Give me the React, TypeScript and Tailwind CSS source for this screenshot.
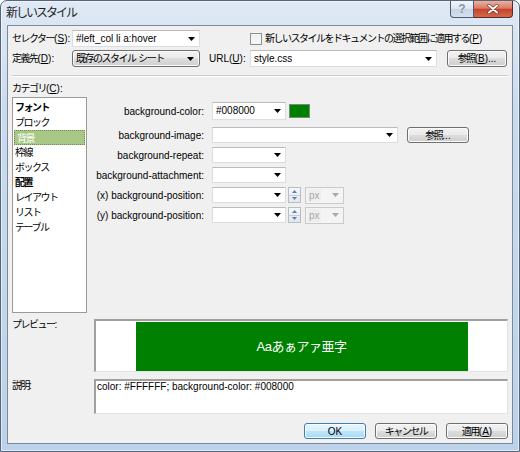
import React from 'react';

// Japanese runs get tighter tracking to match the narrow system UI font
const J = ({ children }: { children: React.ReactNode }) => <span className="tracking-[-1.5px]">{children}</span>;

const Arrow = ({ color = '#000' }: { color?: string }) => (
  <svg width="7" height="4" viewBox="0 0 7 4" className="shrink-0">
    <path d="M0 0h7L3.5 4z" fill={color} />
  </svg>
);

const Combo = ({ width, height = 'h-[16px]', text }: { width: string; height?: string; text?: string }) => (
  <div
    className={`flex items-center justify-between bg-white border border-[#dcdde2] border-t-[#b9bbc1] pl-[3px] pr-[4px] ${width} ${height}`}
  >
    <span className="truncate leading-none">{text}</span>
    <Arrow />
  </div>
);

const Btn = ({ children, width, height = 'h-[16px]', primary }: { children: React.ReactNode; width: string; height?: string; primary?: boolean }) => (
  <div
    className={`flex items-center justify-center rounded-[3px] border shadow-[inset_0_0_0_1px_#fbfbfb] ${
      primary
        ? 'border-[#3c7fb1] bg-[linear-gradient(#eaf6fd_0%,#d9f0fc_50%,#bee6fd_50%,#a7d9f5_100%)]'
        : 'border-[#707070] bg-[linear-gradient(#f2f2f2_0%,#ebebeb_50%,#dddddd_50%,#cfcfcf_100%)]'
    } ${width} ${height}`}
  >
    {children}
  </div>
);

const Spinner = () => (
  <div className="ml-[2px] flex h-[16px] w-[13px] flex-col border border-[#b8bcc4] bg-[linear-gradient(#f6f7f9,#e3e6ea)]">
    <div className="flex flex-1 items-center justify-center border-b border-[#c9ccd2]">
      <svg width="5" height="3" viewBox="0 0 5 3"><path d="M0 3h5L2.5 0z" fill="#5b7fbd" /></svg>
    </div>
    <div className="flex flex-1 items-center justify-center">
      <svg width="5" height="3" viewBox="0 0 5 3"><path d="M0 0h5L2.5 3z" fill="#5b7fbd" /></svg>
    </div>
  </div>
);

const PxBox = () => (
  <div className="ml-[4px] flex h-[17px] w-[39px] items-center justify-between border border-[#cacaca] bg-[#f4f4f4] pr-[4px]">
    <span className="ml-[2px] bg-[#eeeeee] px-[1px] leading-[13px] text-[#a8a8a8]">px</span>
    <Arrow color="#a8a8a8" />
  </div>
);

const categories = [
  { name: 'フォント', bold: true },
  { name: 'ブロック' },
  { name: '背景', selected: true },
  { name: '枠線' },
  { name: 'ボックス' },
  { name: '配置', bold: true },
  { name: 'レイアウト' },
  { name: 'リスト' },
  { name: 'テーブル' },
];

const FormRow = ({ label, children, className = '' }: { label: string; children: React.ReactNode; className?: string }) => (
  <div className={`flex items-center ${className}`}>
    <div className="w-[117px] text-right">{label}</div>
    <div className="ml-[8px] flex items-center">{children}</div>
  </div>
);

export default function App() {
  return (
    <div className="flex h-[452px] w-[520px] flex-col rounded-t-[7px] border border-[#55657a] bg-[linear-gradient(#dfe9f5,#cadbee_25%,#bcd2ea)] px-[6px] pb-[7px] font-[family-name:'Liberation_Sans','Noto_Sans_CJK_JP',sans-serif] text-[10px] text-black shadow-[inset_0_0_0_1px_rgba(255,255,255,0.55)]">
      {/* title bar */}
      <div className="flex h-[24px] items-start justify-between">
        <div className="ml-[-1px] pt-[4px] text-[12px] leading-[16px] tracking-[-2px] text-[#1e1e1e]">新しいスタイル</div>
        <div className="flex">
          <div className="flex h-[17px] w-[24px] items-center justify-center rounded-bl-[4px] border border-t-0 border-[#4d5d71] bg-[linear-gradient(#f2f6fb,#dbe5f0_50%,#c6d4e5_51%,#d5e1ee)] text-[12px] font-bold leading-none text-[#8a97a6]">
            ?
          </div>
          <div className="flex h-[17px] w-[39px] items-center justify-center rounded-br-[4px] border border-l-0 border-t-0 border-[#5a2a24] bg-[linear-gradient(#eab1a3,#dc7a63_45%,#c7432b_52%,#d4694c)]">
            <svg width="12" height="10" viewBox="0 0 12 10">
              <path d="M2 1.5l8 7M10 1.5l-8 7" stroke="#6b2a20" strokeWidth="3.2" strokeLinecap="round" />
              <path d="M2 1.5l8 7M10 1.5l-8 7" stroke="#fff" strokeWidth="2" strokeLinecap="round" />
            </svg>
          </div>
        </div>
      </div>

      {/* client area */}
      <div className="flex flex-1 flex-col border border-[#7d8996] bg-[#f0f0f0] px-[4px] pt-[4px]">
        {/* row 1 */}
        <div className="flex h-[17px] items-center">
          <div className="w-[60px] whitespace-nowrap">
            <J>セレクター</J>(<u>S</u>):
          </div>
          <Combo width="w-[128px]" height="h-[17px]" text="#left_col li a:hover" />
          <div className="ml-[50px] h-[12px] w-[12px] border border-[#8e8f8f] bg-[linear-gradient(#ececec,#f9f9f9)] shadow-[inset_0_0_0_1px_#f4f4f4]" />
          <div className="ml-[3px] whitespace-nowrap">
            <J>新しいスタイルをドキュメントの選択範囲に適用する</J>(<u>P</u>)
          </div>
        </div>

        {/* row 2 */}
        <div className="mt-[3px] flex h-[17px] items-center">
          <div className="w-[60px] whitespace-nowrap">
            <J>定義先</J>(<u>D</u>):
          </div>
          <div className="flex h-[17px] w-[128px] items-center justify-between rounded-[3px] border border-[#707070] bg-[linear-gradient(#f2f2f2_0%,#ebebeb_50%,#dddddd_50%,#cfcfcf_100%)] pl-[3px] pr-[5px] shadow-[inset_0_0_0_1px_#fbfbfb]">
            <span className="whitespace-nowrap">
              <J>既存のスタイル</J> <J>シート</J>
            </span>
            <Arrow />
          </div>
          <div className="ml-[9px] w-[41px]">
            URL(<u>U</u>):
          </div>
          <Combo width="w-[187px]" height="h-[17px]" text="style.css" />
          <div className="ml-[10px]">
            <Btn width="w-[60px]" height="h-[17px]">
              <span className="whitespace-nowrap">
                <J>参照</J>(<u>B</u>)...
              </span>
            </Btn>
          </div>
        </div>

        {/* separator */}
        <div className="mt-[8px] border-t border-b border-t-[#c9c9c9] border-b-white" />

        <div className="mt-[6px] leading-[12px]">
          <J>カテゴリ</J>(<u>C</u>):
        </div>

        <div className="mt-[2px] flex">
          <div className="h-[216px] w-[75px] border border-[#9a9a9a] bg-white pt-[2px]">
            {categories.map((c) => (
              <div
                key={c.name}
                className={`h-[15px] px-[2px] leading-[15px] tracking-[-1.5px] ${c.bold ? 'font-bold' : ''} ${
                  c.selected ? 'mx-[1px] border border-dotted border-[#6f8a4c] bg-[#a9c886] leading-[13px] text-white' : ''
                }`}
              >
                {c.name}
              </div>
            ))}
          </div>

          <div className="flex-1 pt-[5px]">
            <FormRow label="background-color:" className="h-[18px]">
              <Combo width="w-[74px]" height="h-[18px]" text="#008000" />
              <div className="ml-[3px] h-[14px] w-[21px] border border-[#7a8a7a] bg-[#008000]" />
            </FormRow>
            <FormRow label="background-image:" className="mt-[7px] h-[16px]">
              <Combo width="w-[186px]" />
              <div className="ml-[9px]">
                <Btn width="w-[62px]">
                  <span className="whitespace-nowrap">
                    <J>参照</J>...
                  </span>
                </Btn>
              </div>
            </FormRow>
            <FormRow label="background-repeat:" className="mt-[4px] h-[16px]">
              <Combo width="w-[74px]" />
            </FormRow>
            <FormRow label="background-attachment:" className="mt-[4px] h-[16px]">
              <Combo width="w-[74px]" />
            </FormRow>
            <FormRow label="(x) background-position:" className="mt-[4px] h-[16px]">
              <Combo width="w-[74px]" />
              <Spinner />
              <PxBox />
            </FormRow>
            <FormRow label="(y) background-position:" className="mt-[4px] h-[16px]">
              <Combo width="w-[74px]" />
              <Spinner />
              <PxBox />
            </FormRow>
          </div>
        </div>

        {/* preview */}
        <div className="mt-[6px] flex">
          <div className="w-[82px] leading-[12px]">
            <J>プレビュー</J>:
          </div>
          <div className="h-[53px] flex-1 border-t-2 border-l-2 border-r border-b border-t-[#a0a0a0] border-l-[#a0a0a0] border-r-[#e2e2e2] border-b-[#e2e2e2] bg-white pt-[1px]">
            <div className="mx-auto flex h-[49px] w-[332px] items-center justify-center bg-[#008000] text-[13px] tracking-[-0.5px] text-white">
              Aaあぁアァ亜字
            </div>
          </div>
        </div>

        {/* description */}
        <div className="mt-[7px] flex">
          <div className="w-[82px] pt-[1px] leading-[12px]">
            <J>説明</J>:
          </div>
          <div className="h-[35px] flex-1 border-t-2 border-l-2 border-r border-b border-t-[#a0a0a0] border-l-[#a0a0a0] border-r-[#e2e2e2] border-b-[#e2e2e2] bg-white pl-[1px] leading-[12px]">
            color: #FFFFFF; background-color: #008000
          </div>
        </div>

        {/* buttons */}
        <div className="mt-[9px] flex justify-end gap-[9px]">
          <Btn width="w-[62px]" primary>
            OK
          </Btn>
          <Btn width="w-[62px]">
            <J>キャンセル</J>
          </Btn>
          <Btn width="w-[62px]">
            <span className="whitespace-nowrap">
              <J>適用</J>(<u>A</u>)
            </span>
          </Btn>
        </div>
      </div>
    </div>
  );
}
